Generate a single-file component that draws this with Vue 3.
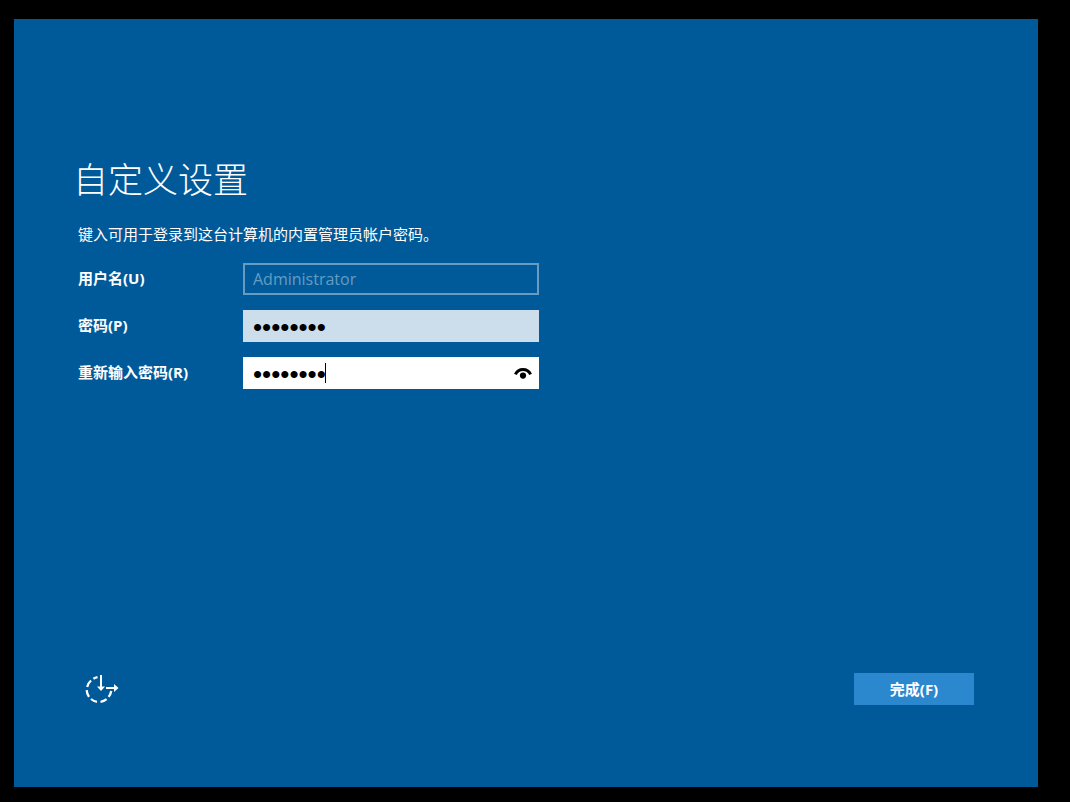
<script setup>
import { ref } from 'vue'

const user = ref('Administrator')
const password = ref('password')
const confirm = ref('password')
const revealed = ref(false)
</script>

<template>
  <div class="frame">
    <main class="screen">
      <form class="setup" @submit.prevent>
        <h1 class="title">自定义设置</h1>
        <p class="hint">键入可用于登录到这台计算机的内置管理员帐户密码。</p>

        <div class="fields">
          <label class="label" for="user">用户名(U)</label>
          <input id="user" v-model="user" class="box box-disabled" type="text" disabled>

          <label class="label" for="password">密码(P)</label>
          <input id="password" v-model="password" class="box box-idle" type="password">

          <label class="label" for="confirm">重新输入密码(R)</label>
          <div class="active">
            <input id="confirm" v-model="confirm" class="box box-active" :type="revealed ? 'text' : 'password'">
            <span class="caret"></span>
            <button
              class="reveal"
              type="button"
              aria-label="显示密码"
              @mousedown="revealed = true"
              @mouseup="revealed = false"
              @mouseleave="revealed = false"
            >
              <svg width="18" height="12" viewBox="0 0 18 12">
                <path d="M1.4 7.4C3 4 5.8 2.500 9 2.500s6 1.500 7.600 4.900" fill="none" stroke="#000" stroke-width="3" />
                <circle cx="9" cy="8.600" r="3.100" fill="#000" />
              </svg>
            </button>
          </div>
        </div>

        <footer class="footer">
          <button class="access" type="button" aria-label="轻松使用">
            <svg width="34" height="30" viewBox="0 0 34 30" fill="none" stroke="#fff" stroke-width="2.3">
              <path d="M12.5 3.1A12.4 12.4 0 0 0 8.4 4.7M6 6.500A12.4 12.4 0 0 0 2.2 12.9M1.7 16.1A12.4 12.4 0 0 0 4 22.9M6 25A12.4 12.4 0 0 0 12 27.8M15.5 27.8A12.4 12.4 0 0 0 21.6 25.1M23.6 22.9A12.4 12.4 0 0 0 26.2 17" />
              <path d="M16 1v13M21 14h9" stroke-width="2" />
              <path d="M12 12.500h8l-4 4.500zM29 10v8l4.500-4z" fill="#fff" stroke="none" />
            </svg>
          </button>
          <button class="finish" type="submit">完成(F)</button>
        </footer>
      </form>
    </main>
  </div>
</template>

<style>
html,
body {
  background: #000;
}
</style>

<style scoped>
.frame {
  box-sizing: border-box;
  display: flex;
  min-height: 100vh;
  padding: 19px 32px 15px 14px;
  background: #000;
  color: #fff;
  font-family: "Open Sans", "Noto Sans CJK SC", sans-serif;
  font-size: 15px;
}

.screen {
  display: flex;
  flex: 1;
  background: #005a9a;
}

.setup {
  display: flex;
  flex: 1;
  flex-direction: column;
  padding: 137px 64px 82px;
}

.title {
  margin: 0 0 0 -5px;
  font-size: 35px;
  font-weight: 300;
  line-height: 48px;
}

.hint {
  margin: 0;
  padding: 18px 0 17px;
  line-height: 24px;
}

.fields {
  display: grid;
  grid-template-columns: 165px minmax(0, 296px);
  row-gap: 15px;
  align-items: center;
}

.label {
  padding-bottom: 2px;
  font-weight: 700;
  line-height: 24px;
}

.box {
  box-sizing: border-box;
  display: block;
  width: 100%;
  height: 32px;
  padding: 2px 10px 0;
  border: 0;
  border-radius: 0;
  outline: 0;
  color: #000;
  font-family: "Liberation Sans", sans-serif;
  font-size: 26px;
}

.box-disabled {
  padding: 0 8px;
  border: 2px solid #669cc2;
  background: transparent;
  color: #669cc2;
  font-family: "Open Sans", sans-serif;
  font-size: 16px;
}

.box-idle {
  background: #ccdeeb;
}

.box-active {
  padding-right: 32px;
  background: #fff;
}

.active {
  position: relative;
}

.caret {
  position: absolute;
  top: 6px;
  left: 82px;
  width: 1px;
  height: 20px;
  background: #000;
}

.reveal {
  position: absolute;
  top: 0;
  right: 0;
  display: flex;
  align-items: center;
  justify-content: center;
  width: 32px;
  height: 32px;
  padding: 0;
  border: 0;
  background: transparent;
}

.footer {
  display: flex;
  align-items: center;
  justify-content: space-between;
  margin-top: auto;
}

.access {
  display: flex;
  padding: 0 7px;
  border: 0;
  background: transparent;
}

.finish {
  width: 120px;
  height: 32px;
  padding: 0 0 2px;
  border: 0;
  background: #2b88cf;
  color: #fff;
  font: inherit;
  font-weight: 700;
}
</style>
